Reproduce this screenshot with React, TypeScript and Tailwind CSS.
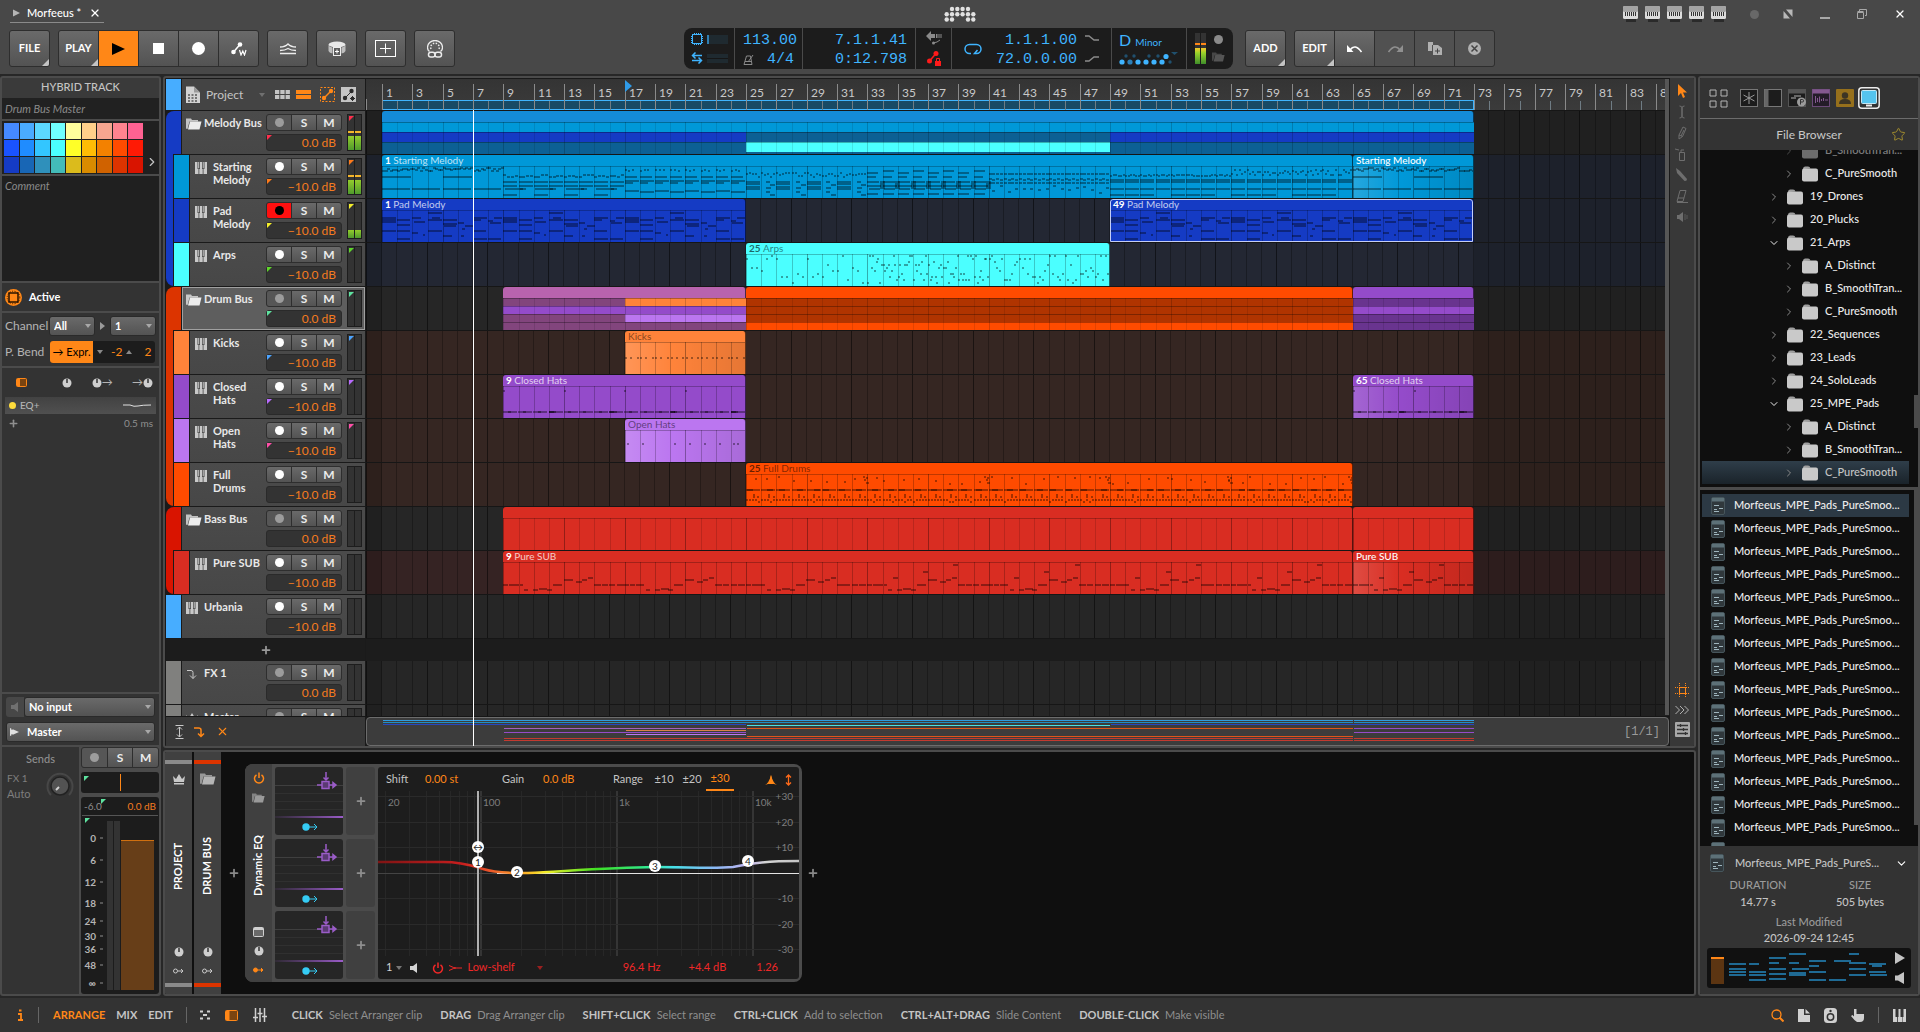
import { Fragment, type ReactNode } from "react";
import { clsx } from "clsx";
import { ChevronDown, ChevronRight, Plus, Star, X } from "lucide-react";

/* ---------- timeline helpers ---------- */

const TIMELINE_START = 16;
const BAR_WIDTH = 91 / 6;
const barX = (bar: number) => TIMELINE_START + Math.round((bar - 1) * BAR_WIDTH);
const span = (from: number, to: number) => ({
  left: barX(from),
  width: barX(to) - barX(from),
});
const noise = (n: number) => {
  const v = Math.sin(n * 127.1 + 11.7) * 43758.5453;
  return v - Math.floor(v);
};

// [bar, y, length in bars, height]
type Note = [number, number, number, number?];

function startingNotes(from: number, to: number): Note[] {
  const notes: Note[] = [];
  for (let b = from; b < to; b++) {
    const intro = b < 9 || b >= 65;
    if (intro) {
      for (let i = 0; i < 6; i++) notes.push([b + i / 6, 1 + Math.floor(noise(b * 7 + i) * 4), 0.17, 2]);
      if (b % 2 === 1) {
        notes.push([b, 22, 1.85]);
        if (b % 4 === 1) notes.push([b, 10, 1.9]);
      }
    } else if (b < 17) {
      for (let i = 0; i < 4; i++) notes.push([b + i / 4, 8 + Math.floor(noise(b + i * 3) * 3), 0.22]);
      notes.push([b, 15, 0.95], [b, 19, 0.9], [b + 0.1, 22, b % 2 ? 1.2 : 0.4]);
      if (b % 2) notes.push([b, 28, 0.9]);
    } else if (b < 25) {
      for (let i = 0; i < 3; i++) notes.push([b + i / 4, 3 + Math.floor(noise(b + i) * 2), 0.15]);
      notes.push([b, 10, 0.8], [b, 14, 0.95], [b, 16, 0.5], [b, b % 2 ? 24 : 25, 0.9]);
    } else if (b < 33) {
      for (let i = 0; i < 5; i++) notes.push([b + i / 5, 6 + Math.floor(noise(b * 5 + i) * 5), 0.1]);
      if (b % 2) notes.push([b, 15, 0.95], [b, 17, 0.95], [b, 20, 0.95], [b, 22, 0.9]);
      else notes.push([b + 0.3, 15, 0.25], [b + 0.6, 18, 0.3], [b + 0.3, 21, 0.3], [b + 0.3, 25, 0.25], [b + 0.6, 28, 0.35]);
    } else if (b < 41) {
      notes.push([b, b % 2 ? 6 : 4, 0.7], [b, 10, 0.6], [b, 15, 0.8, 2], [b, 19, 0.95], [b + 0.1, 22, 0.7], [b, 27, 0.7]);
      notes.push([b + 0.85, 15, 0.3, 8]);
    } else if (b < 49) {
      for (let i = 0; i < 4; i++) {
        notes.push([b + i / 4, 7, 0.19], [b + i / 4, 12 + (i % 2), 0.19], [b + i / 4, 16, 0.19]);
        if (i % 2) notes.push([b + i / 4, 19 + Math.floor(noise(b + i * 9) * 8), 0.19]);
      }
    } else {
      for (let i = 0; i < 6; i++)
        notes.push([b + i / 6, (b < 57 ? 8 : 3) + Math.floor(noise(b * 3 + i) * (b < 57 ? 2 : 6)), 0.11]);
      notes.push([b, 13, 0.95], [b, 15, 0.9], [b, 22, 0.95]);
      if (b % 4 !== 0) notes.push([b, 28, 0.95]);
    }
  }
  return notes;
}

function padNotes(from: number, to: number): Note[] {
  const notes: Note[] = [];
  for (let b = from; b < to; b++) {
    const k = (b - from) % 8;
    if (k === 0) notes.push([b, 7, 0.9, 6], [b, 20, 0.9]);
    else if (k === 1) notes.push([b, 9, 0.85], [b, 14, 0.85], [b, 20, 0.85], [b, 28, 0.85]);
    else if (k === 2) notes.push([b, 7, 0.6], [b + 0.1, 11, 0.7, 2], [b, 22, 0.4], [b + 0.7, 24, 0.12]);
    else if (k === 3) notes.push([b, 2, 0.9], [b, 9, 0.9], [b, 20, 0.9], [b + 0.3, 7, 0.5]);
    else if (k === 4) notes.push([b, 9, 0.9], [b, 13, 0.9], [b + 0.1, 15, 0.8], [b, 25, 0.6]);
    else if (k === 5) notes.push([b, 12, 0.4], [b + 0.3, 18, 0.2], [b + 0.5, 15, 0.5], [b + 0.2, 25, 0.2]);
    else if (k === 6) notes.push([b, 7, 0.9], [b, 9, 0.5], [b, 20, 0.85], [b, 28, 0.9]);
    else notes.push([b, 10, 0.3], [b + 0.4, 7, 0.5], [b + 0.1, 12, 0.7], [b, 28, 0.85]);
  }
  return notes;
}

function arpNotes(): Note[] {
  const notes: Note[] = [];
  for (let b = 25; b < 49; b++) {
    const count = b < 33 ? 3 : b < 41 ? 9 : 6;
    for (let i = 0; i < count; i++)
      notes.push([b + i / count, 1 + Math.floor(noise(b * 13 + i) * 10) * 3, 0.12]);
  }
  return notes;
}

function kickNotes(): Note[] {
  return Array.from({ length: 24 }, (_, i) => [17 + i / 3 + (i % 3 === 2 ? 0.1 : 0), 15, 0.12] as Note);
}

function closedHatNotes(from: number, to: number): Note[] {
  const notes: Note[] = [];
  for (let b = from; b < to; b++) {
    if ((b - from) % 4 === 0) notes.push([b, 4, 0.12]);
    notes.push([b, 25, 0.9], [b + 0.3, 25, 0.2]);
    if (b % 4 === 0) notes.push([b, 25, 0.3], [b + 0.05, 25, 0.25]);
  }
  return notes;
}

function openHatNotes(): Note[] {
  return [17.1, 18.1, 20.2, 21.2, 22.2, 23.2, 24.1, 24.4].map((b) => [b, 13, 0.12] as Note);
}

function fullDrumNotes(): Note[] {
  const notes: Note[] = [];
  for (let b = 25; b < 65; b++) {
    notes.push([b, 15, 0.95], [b + noise(b) * 0.5, 15, 0.4]);
    notes.push([b + noise(b * 2) * 0.8, 2 + Math.floor(noise(b * 3) * 8), 0.12]);
    if (b % 8 === 0) notes.push([b + 0.7, 2, 0.12], [b + 0.8, 5, 0.15], [b + 0.9, 8, 0.2], [b + 0.9, 3, 0.12]);
    for (let i = 0; i < 5; i++) notes.push([b + i / 5, 25 + (noise(b * 5 + i) > 0.85 ? 2 : 0), 0.13]);
    notes.push([b + 0.45, 20, 0.12, 4], [b + 0.75, 22, 0.12]);
  }
  return notes;
}

function subNotes(from: number, to: number): Note[] {
  const notes: Note[] = [];
  const phrase: Note[] = [
    [0, 22, 0.35], [0.4, 22, 0.3], [0.75, 22, 0.3], [1.1, 22, 0.2],
    [1.4, 27, 0.25], [2, 27, 0.3], [2.4, 26, 0.5], [2.9, 27, 0.3], [3.3, 22, 0.6],
    [4, 17, 0.6], [4.8, 19, 0.4], [5.2, 17, 0.3], [5.6, 15, 0.3],
    [6, 22, 0.45], [6.5, 22, 0.4], [7, 22, 0.4], [7.5, 22, 0.45],
  ];
  for (let b = from; b < to; b += 8) {
    for (const [x, y, len] of phrase) notes.push([b + x, y, len]);
    if (b >= 33) notes.push([b + 1.7, 15, 0.3], [b + 3.7, 9, 0.3], [b + 5.7, 2, 0.3]);
  }
  return notes.filter(([b]) => b < to);
}

/* ---------- data ---------- */

type Band = { from: number; to: number; colors: string[] };

type Clip = {
  from: number;
  to: number;
  color: string;
  label?: string;
  bar?: string;
  dark?: boolean;
  notes?: Note[];
  selected?: boolean;
  fade?: boolean;
};

type Track = {
  name: string;
  kind: "group" | "keys" | "fx" | "master";
  color: string;
  volume: string;
  lane: string;
  corner?: string;
  meter?: number;
  armed?: boolean;
  selected?: boolean;
  clips?: Clip[];
  bands?: Band[];
  children?: Track[];
};

const MELODY_DIM = "bg-[#0c6094]";
const DRUM_DIM = "bg-[#82457d]";
const ORANGE_DIM = "bg-[#b03400]";
const PURPLE_DIM = "bg-[#69348f]";
const PURPLE = "bg-[#944bca]";

const tracks: Track[] = [
  {
    name: "Melody Bus", kind: "group", color: "bg-[#153bc4]", volume: "0.0 dB", lane: "bg-[#262626]",
    corner: "fill-[#ff2e4c]", meter: 17,
    clips: [{ from: 1, to: 73, color: "bg-[#148bd8]" }],
    bands: [
      { from: 1, to: 25, colors: ["bg-[#0098d8]", "bg-[#153bc4]", MELODY_DIM] },
      { from: 25, to: 49, colors: ["bg-[#0098d8]", MELODY_DIM, "bg-[#4bffff]"] },
      { from: 49, to: 73, colors: ["bg-[#0098d8]", "bg-[#153bc4]", MELODY_DIM] },
    ],
    children: [
      {
        name: "Starting Melody", kind: "keys", color: "bg-[#0098d8]", volume: "−10.0 dB", lane: "bg-[#232733]",
        corner: "fill-[#ff7a1a]", meter: 17,
        clips: [
          { from: 1, to: 65, color: "bg-[#0098d8]", bar: "1", label: "Starting Melody", notes: startingNotes(1, 65) },
          { from: 65, to: 73, color: "bg-[#0098d8]", bar: "Starting Melody", notes: startingNotes(65, 73), fade: true },
        ],
      },
      {
        name: "Pad Melody", kind: "keys", color: "bg-[#153bc4]", volume: "−10.0 dB", lane: "bg-[#232733]",
        corner: "fill-[#f4ee2a]", meter: 11, armed: true,
        clips: [
          { from: 1, to: 25, color: "bg-[#153bc4]", bar: "1", label: "Pad Melody", notes: padNotes(1, 25) },
          { from: 49, to: 73, color: "bg-[#153bc4]", bar: "49", label: "Pad Melody", notes: padNotes(49, 73), selected: true },
        ],
      },
      {
        name: "Arps", kind: "keys", color: "bg-[#4bffff]", volume: "−10.0 dB", lane: "bg-[#232733]",
        corner: "fill-[#5ed62a]",
        clips: [{ from: 25, to: 49, color: "bg-[#4bffff]", bar: "25", label: "Arps", dark: true, notes: arpNotes() }],
      },
    ],
  },
  {
    name: "Drum Bus", kind: "group", color: "bg-[#dc3400]", volume: "0.0 dB", lane: "bg-[#262626]",
    corner: "fill-[#5ee3a0]", selected: true,
    clips: [
      { from: 9, to: 25, color: "bg-[#b863ae]" },
      { from: 25, to: 65, color: "bg-[#ff4b00]" },
      { from: 65, to: 73, color: PURPLE },
    ],
    bands: [
      { from: 9, to: 17, colors: [DRUM_DIM, PURPLE, DRUM_DIM, DRUM_DIM] },
      { from: 17, to: 25, colors: ["bg-[#ff833a]", PURPLE, "bg-[#bb76f0]", DRUM_DIM] },
      { from: 25, to: 65, colors: [ORANGE_DIM, ORANGE_DIM, ORANGE_DIM, "bg-[#ff4b00]"] },
      { from: 65, to: 73, colors: [PURPLE_DIM, PURPLE, PURPLE_DIM, PURPLE_DIM] },
    ],
    children: [
      {
        name: "Kicks", kind: "keys", color: "bg-[#ff833a]", volume: "−10.0 dB", lane: "bg-[#352622]", corner: "fill-[#4ba3ff]",
        clips: [{ from: 17, to: 25, color: "bg-[#ff833a]", label: "Kicks", dark: true, notes: kickNotes(), fade: true }],
      },
      {
        name: "Closed Hats", kind: "keys", color: PURPLE, volume: "−10.0 dB", lane: "bg-[#352622]", corner: "fill-[#b96bff]",
        clips: [
          { from: 9, to: 25, color: PURPLE, bar: "9", label: "Closed Hats", notes: closedHatNotes(9, 25) },
          { from: 65, to: 73, color: PURPLE, bar: "65", label: "Closed Hats", notes: closedHatNotes(65, 73), fade: true },
        ],
      },
      {
        name: "Open Hats", kind: "keys", color: "bg-[#bb76f0]", volume: "−10.0 dB", lane: "bg-[#352622]", corner: "fill-[#ff4fa8]",
        clips: [{ from: 17, to: 25, color: "bg-[#bb76f0]", label: "Open Hats", dark: true, notes: openHatNotes(), fade: true }],
      },
      {
        name: "Full Drums", kind: "keys", color: "bg-[#ff4b00]", volume: "−10.0 dB", lane: "bg-[#352622]",
        clips: [{ from: 25, to: 65, color: "bg-[#ff4b00]", bar: "25", label: "Full Drums", dark: true, notes: fullDrumNotes() }],
      },
    ],
  },
  {
    name: "Bass Bus", kind: "group", color: "bg-[#d91400]", volume: "0.0 dB", lane: "bg-[#262626]",
    clips: [
      { from: 9, to: 65, color: "bg-[#d92d22]" },
      { from: 65, to: 73, color: "bg-[#d92d22]" },
    ],
    children: [
      {
        name: "Pure SUB", kind: "keys", color: "bg-[#d92d22]", volume: "−10.0 dB", lane: "bg-[#352323]",
        clips: [
          { from: 9, to: 65, color: "bg-[#d92d22]", bar: "9", label: "Pure SUB", notes: subNotes(9, 65) },
          { from: 65, to: 73, color: "bg-[#d92d22]", bar: "Pure SUB", notes: subNotes(65, 73), fade: true },
        ],
      },
    ],
  },
  { name: "Urbania", kind: "keys", color: "bg-[#47adff]", volume: "−10.0 dB", lane: "bg-[#262626]" },
];

const returnTracks: Track[] = [
  { name: "FX 1", kind: "fx", color: "bg-[#80807e]", volume: "0.0 dB", lane: "bg-[#262626]" },
  { name: "Master", kind: "master", color: "bg-[#80807e]", volume: "0.0 dB", lane: "bg-[#262626]" },
];

const palette = [
  "bg-[#4589ff]", "bg-[#4aabff]", "bg-[#5cd8ff]", "bg-[#70ffff]", "bg-[#fffe9c]", "bg-[#ffd08a]", "bg-[#f6a690]", "bg-[#ff838f]", "bg-[#ff6292]",
  "bg-[#1a53ff]", "bg-[#1f8cff]", "bg-[#33c6ff]", "bg-[#4bffff]", "bg-[#ffff28]", "bg-[#ffbd05]", "bg-[#f38100]", "bg-[#ff4b00]", "bg-[#ff1a05]",
  "bg-[#153bc4]", "bg-[#1866b5]", "bg-[#2f90bb]", "bg-[#43bbb8]", "bg-[#dbbb1c]", "bg-[#d98b00]", "bg-[#d06200]", "bg-[#dc3400]", "bg-[#d91400]",
];

const tree = [
  { name: "B_SmoothTran...", level: 2 },
  { name: "C_PureSmooth", level: 2 },
  { name: "19_Drones", level: 1 },
  { name: "20_Plucks", level: 1 },
  { name: "21_Arps", level: 1, open: true },
  { name: "A_Distinct", level: 2 },
  { name: "B_SmoothTran...", level: 2 },
  { name: "C_PureSmooth", level: 2 },
  { name: "22_Sequences", level: 1 },
  { name: "23_Leads", level: 1 },
  { name: "24_SoloLeads", level: 1 },
  { name: "25_MPE_Pads", level: 1, open: true },
  { name: "A_Distinct", level: 2 },
  { name: "B_SmoothTran...", level: 2 },
  { name: "C_PureSmooth", level: 2, selected: true },
];

const hints = [
  ["CLICK", "Select Arranger clip"],
  ["DRAG", "Drag Arranger clip"],
  ["SHIFT+CLICK", "Select range"],
  ["CTRL+CLICK", "Add to selection"],
  ["CTRL+ALT+DRAG", "Slide Content"],
  ["DOUBLE-CLICK", "Make visible"],
];

/* ---------- icons ---------- */

function Icon(props: { w?: number; h?: number; className?: string; children: ReactNode }) {
  const { w = 16, h = 16 } = props;
  return (
    <svg width={w} height={h} viewBox={`0 0 ${w} ${h}`} className={clsx("shrink-0", props.className)} fill="none" aria-hidden="true">
      {props.children}
    </svg>
  );
}

function KeysIcon(props: { className?: string }) {
  return (
    <Icon w={12} h={12} className={clsx("fill-[#c9c9c9]", props.className)}>
      <path d="M0 0h3.500v12H0zM4.300 0h3.400v12H4.300zM8.500 0H12v12H8.500z" />
      <path d="M2.500 0h2.500v7H2.500zM7 0h2.500v7H7z" fill="#484848" />
      <path d="M3.200 0h1v6.300h-1zM7.700 0h1v6.300h-1z" />
    </Icon>
  );
}

function FolderOpenIcon(props: { className?: string }) {
  return (
    <Icon w={16} h={12} className={props.className ?? "fill-[#ececec]"}>
      <path d="M0 0.500h5l1 1.500h6v1.500H3.500L1.500 11H1Q0 11 0 10z" opacity="0.75" />
      <path d="M4 3.500h11.500l-2 8H2z" />
    </Icon>
  );
}

function FolderIcon() {
  return (
    <Icon w={16} h={16}>
      <path d="M1 3Q1 0.500 3 0.500h3q2 0 2.500 2z" fill="#9d9d9d" />
      <rect x="0" y="2.500" width="16" height="13" rx="2" fill="#c9c9c9" />
    </Icon>
  );
}

function FileIcon() {
  return (
    <Icon w={14} h={18}>
      <rect x="0.500" y="0.500" width="13" height="17" rx="1.500" fill="#30383c" stroke="#46555b" />
      <path d="M1 1h12v3.500H1z" fill="#5d7178" />
      <path d="M3 8.500h5M8 11.500h4M3 12.500h3M3 14.500h5" stroke="#9fb6be" />
    </Icon>
  );
}

function PowerIcon(props: { className?: string }) {
  return (
    <Icon w={12} h={12} className={props.className}>
      <path d="M3.500 2.800a4.500 4.500 0 1 0 5 0M6 0.500v5.500" stroke="currentColor" strokeWidth="1.500" />
    </Icon>
  );
}

function KnobIcon() {
  return (
    <Icon w={10} h={10}>
      <circle cx="5" cy="5" r="4.500" fill="#cfcfcf" />
      <path d="M5 1v4" stroke="#333" strokeWidth="1.500" />
    </Icon>
  );
}

function SpeakerIcon(props: { className?: string }) {
  return (
    <Icon w={8} h={10} className={props.className ?? "fill-[#c9c9c9]"}>
      <path d="M0 3h3l4-3v10L3 7H0z" />
    </Icon>
  );
}

function Caret(props: { className?: string; up?: boolean }) {
  return (
    <Icon w={6} h={4} className={props.className ?? "fill-[#9a9a9a]"}>
      <path d={props.up ? "M0 4h6L3 0z" : "M0 0h6L3 4z"} />
    </Icon>
  );
}

function Corner(props: { className?: string; fill: string }) {
  return (
    <svg width="5" height="5" viewBox="0 0 5 5" className={clsx("absolute", props.fill, props.className)} aria-hidden="true">
      <path d="M0 0h5L0 5z" />
    </svg>
  );
}

function RoutingIcon(props: { className?: string }) {
  return (
    <Icon w={11} h={6} className={props.className ?? "text-[#c9c9c9]"}>
      <circle cx="2.500" cy="3" r="2" stroke="currentColor" />
      <path d="M5 3h5M8 1l2 2-2 2" stroke="currentColor" />
    </Icon>
  );
}

/* ---------- top bar ---------- */

const buttonFace = "bg-linear-to-b from-[#6a6a6a] to-[#535353]";

function ToolButton(props: { label: string; className?: string; disabled?: boolean; menu?: boolean; children: ReactNode }) {
  return (
    <button
      type="button"
      aria-label={props.label}
      disabled={props.disabled}
      className={clsx(
        "relative flex h-[35px] w-[39px] items-center justify-center text-[11px] font-bold text-white",
        props.className ?? (props.disabled ? "bg-[#515151]" : buttonFace),
      )}
    >
      {props.children}
      {props.menu && (
        <svg width="7" height="7" viewBox="0 0 7 7" className="absolute right-0 bottom-0 fill-[#c4c4c4]" aria-hidden="true">
          <path d="M7 0v7H0z" />
        </svg>
      )}
    </button>
  );
}

function ButtonGroup(props: { children: ReactNode }) {
  return <div className="flex gap-px overflow-hidden rounded-[3px] border border-[#2e2e2e] bg-[#2e2e2e]">{props.children}</div>;
}

function WindowControls() {
  return (
    <div className="flex items-center text-[#a8a8a8]">
      <div className="flex gap-[7px]">
        {[0, 1, 2, 3, 4].map((i) => (
          <Icon key={i} w={15} h={17}>
            <rect width="15" height="13" rx="1.500" fill="#dcdcdc" />
            <rect width="15" height="6" rx="1.500" fill="#a3a3a3" />
            <path d="M2.500 6v4M4.500 6v4M6.500 6v4M8.500 6v4M10.500 6v4M12.500 6v4" stroke="#333" />
            <rect x="3" y="13" width="10" height="3" fill="#2a2a2a" />
          </Icon>
        ))}
      </div>
      <span className="ml-6 h-[9px] w-[9px] rounded-full bg-[#686868]" />
      <button type="button" aria-label="Full screen" className="ml-6">
        <Icon w={10} h={10}>
          <path d="M3 0.500h6.500V8zM0.500 2v7.500H7z" fill="#b8b8b8" />
        </Icon>
      </button>
      <button type="button" aria-label="Minimize" className="ml-[27px]">
        <Icon w={10} h={10}>
          <path d="M0 9h10" stroke="currentColor" strokeWidth="2" />
        </Icon>
      </button>
      <button type="button" aria-label="Restore" className="ml-[27px]">
        <Icon w={10} h={10}>
          <path d="M2.500 2V0.500h7v6H8M0.500 3.500h6v6h-6zM0.500 2.500h6" stroke="currentColor" />
        </Icon>
      </button>
      <button type="button" aria-label="Close window" className="ml-[27px] text-white">
        <X size={12} strokeWidth={2.5} />
      </button>
    </div>
  );
}

function Transport() {
  const cell = "flex h-full items-center border-r border-[#4a4a4a]";
  return (
    <div className="flex h-[41px] items-center overflow-hidden rounded-[8px] bg-[#1c1c1c] text-[#3fb4ff]">
      <div className={clsx(cell, "w-[51px] flex-col justify-between py-[5px]")}>
        <div className="flex items-center gap-1">
          <Icon w={12} h={12}>
            <rect x="1.500" y="1.500" width="9" height="9" stroke="currentColor" />
            <path d="M3.500 0v1M5.500 0v1M7.500 0v1M9.500 0v1M3.500 11v1M5.500 11v1M7.500 11v1M9.500 11v1M0 3.500h1M0 5.500h1M0 7.500h1M0 9.500h1M11 3.500h1M11 5.500h1M11 7.500h1M11 9.500h1" stroke="currentColor" />
          </Icon>
          <span className="h-[9px] w-[21px] border-l-2 border-[#2f7fb2] bg-[#1f2a30]" />
        </div>
        <div className="flex items-center gap-1">
          <Icon w={12} h={12}>
            <path d="M11 3.500H2M4.500 0.500L1.500 3.500l3 3M1 8.500h9M7.500 5.500l3 3-3 3" stroke="currentColor" strokeWidth="1.500" />
          </Icon>
          <span className="h-[9px] w-[21px] border-y-4 border-[#1f2a30] bg-[#161616]" />
        </div>
      </div>
      <div className={clsx(cell, "w-[68px] flex-col items-stretch px-2 pt-[3px] font-mono-lcd")}>
        <span className="text-right text-[15px] leading-[19px]">113.00</span>
        <span className="flex items-center justify-between text-[15px] leading-[19px]">
          <Icon w={12} h={11} className="text-[#8a8a8a]">
            <path d="M1 10.500h8L7.500 2h-4zM5 8l5-7M2 7.500h6" stroke="currentColor" />
          </Icon>
          4/4
        </span>
      </div>
      <div className={clsx(cell, "w-[113px] flex-col items-stretch pt-[3px] pr-2 font-mono-lcd")}>
        <span className="text-right text-[15px] leading-[19px]">7.1.1.41</span>
        <span className="text-right text-[15px] leading-[19px]">0:12.798</span>
      </div>
      <div className={clsx(cell, "w-9 flex-col justify-around")}>
        <Icon w={16} h={14}>
          <path d="M0 5l5-5v3h4v4H5v3zM10 3h1.500v4H10zM12.500 3h1v4h-1zM14.500 3h1v4h-1z" fill="#8a8a8a" />
          <path d="M7 12l4-1 3-2" stroke="#8a8a8a" />
          <circle cx="7.500" cy="12" r="1.500" fill="#8a8a8a" />
        </Icon>
        <Icon w={14} h={15}>
          <path d="M2.500 10L9 2.500" stroke="#ff1a1a" strokeWidth="1.500" />
          <circle cx="2.500" cy="10" r="2.500" fill="#ff1a1a" />
          <circle cx="9" cy="2.500" r="2.500" fill="#ff1a1a" />
          <path d="M8 10h6v5H8z" fill="#ff1a1a" />
          <path d="M9.500 10V7.500h3V10" stroke="#ff1a1a" />
        </Icon>
      </div>
      <div className={clsx(cell, "w-40 gap-2 px-3")}>
        <button type="button" aria-label="Loop">
          <Icon w={18} h={12}>
            <path d="M7 10.500H5.500a4.500 4.500 0 0 1 0-9h7a4.500 4.500 0 0 1 0 9H11M13.500 7l-3 3.500h4" stroke="currentColor" strokeWidth="1.500" />
          </Icon>
        </button>
        <div className="flex flex-1 flex-col pt-[3px] font-mono-lcd">
          <span className="text-right text-[15px] leading-[19px]">1.1.1.00</span>
          <span className="text-right text-[15px] leading-[19px]">72.0.0.00</span>
        </div>
        <div className="flex flex-col gap-[15px] text-[#8a8a8a]">
          <Icon w={14} h={6}>
            <path d="M0 1h4l5 4h5" stroke="currentColor" strokeWidth="1.500" />
          </Icon>
          <Icon w={14} h={6}>
            <path d="M0 5h4l5-4h5" stroke="currentColor" strokeWidth="1.500" />
          </Icon>
        </div>
      </div>
      <div className={clsx(cell, "w-[75px] flex-col items-start pt-[2px] pl-[7px]")}>
        <span className="text-[16px] leading-5">
          D <span className="text-[10px]">Minor</span>
        </span>
        <Icon w={60} h={14}>
          {[3, 11, 19, 27, 35, 43].map((x) => (
            <circle key={x} cx={x} cy="10" r="2.600" fill={x === 11 ? "#2c7fb8" : "#3fb4ff"} />
          ))}
          <circle cx="47" cy="4.500" r="2.600" fill="#3fb4ff" />
          {[7, 15, 30, 39].map((x) => (
            <circle key={x} cx={x} cy="4" r="1.700" fill="#20506e" />
          ))}
          <circle cx="51" cy="10" r="1.700" fill="#20506e" />
          <path d="M52 0h7l-3.500 3z" fill="#20506e" />
        </Icon>
      </div>
      <div className="flex h-full w-[46px] items-center gap-[6px] pl-2">
        <div className="flex gap-px">
          {[0, 1].map((i) => (
            <div key={i} className="flex h-[31px] w-[5px] flex-col justify-end bg-[#333]">
              <span className="mb-[3px] h-[2px] bg-[#ff8717]" />
              <span className="h-[16px] bg-linear-to-b from-[#f3c62c] via-[#9ad32a] via-30% to-[#3f8f2a]" />
            </div>
          ))}
        </div>
        <div className="flex flex-col items-center gap-2">
          <span className="h-[9px] w-[9px] rounded-full bg-[#8a8a8a]" />
          <FolderOpenIcon className="h-[10px] w-[13px] fill-[#555]" />
        </div>
      </div>
    </div>
  );
}

function TopBar() {
  return (
    <header className="shrink-0 border-b-2 border-[#272727] bg-[#484848]">
      <div className="grid h-7 grid-cols-[1fr_auto_1fr] items-center px-[10px]">
        <div className="flex h-full items-end">
          <div className="mb-[5px] flex items-center border-b border-[#8a8a8a] px-[3px] pb-[1px]">
            <Icon w={7} h={8} className="fill-[#b5b5b5]">
              <path d="M0 0.500v7L7 4z" />
            </Icon>
            <span className="ml-[7px] text-[11px] leading-4 font-medium text-white">Morfeeus *</span>
            <button type="button" aria-label="Close project" className="ml-2 text-white">
              <X size={12} strokeWidth={2.5} />
            </button>
          </div>
        </div>
        <Icon w={32} h={16} className="fill-[#e2e2e2]">
          {[8, 13.3, 18.600, 24].map((x) => (
            <circle key={x} cx={x} cy="3" r="2.200" />
          ))}
          {[2.7, 8, 13.3, 18.600, 24, 29.3].map((x) => (
            <circle key={x} cx={x} cy="8.300" r="2.200" />
          ))}
          {[2.7, 8, 24, 29.3].map((x) => (
            <circle key={x} cx={x} cy="13.500" r="2.200" />
          ))}
        </Icon>
        <div className="flex justify-end pr-[4px]">
          <WindowControls />
        </div>
      </div>
      <div className="grid h-[46px] grid-cols-[1fr_auto_1fr] items-start pt-[2px] pr-3 pl-[9px]">
        <div className="flex gap-2">
          <ButtonGroup>
            <ToolButton label="File" menu>FILE</ToolButton>
          </ButtonGroup>
          <ButtonGroup>
            <ToolButton label="Play options" menu>PLAY</ToolButton>
            <ToolButton label="Play" className="bg-[#ff8717]">
              <Icon w={13} h={12} className="fill-black">
                <path d="M0 0l13 6L0 12z" />
              </Icon>
            </ToolButton>
            <ToolButton label="Stop">
              <span className="h-[11px] w-[11px] bg-white" />
            </ToolButton>
            <ToolButton label="Record">
              <span className="h-[13px] w-[13px] rounded-full bg-white" />
            </ToolButton>
            <ToolButton label="Automation write">
              <Icon w={16} h={14}>
                <path d="M2.500 10L9 2.500" stroke="white" strokeWidth="1.500" />
                <circle cx="2.500" cy="10" r="2.300" fill="white" />
                <circle cx="9" cy="2.500" r="2.300" fill="white" />
                <path d="M8.500 8l1.500 5 1.800-4 1.700 4L15 8" stroke="white" strokeWidth="1.200" />
              </Icon>
            </ToolButton>
          </ButtonGroup>
          <ButtonGroup>
            <ToolButton label="Groove">
              <Icon w={16} h={12}>
                <path d="M0 4q5 0 8-3 3 3 8 3M0 7.500q5 0 8-2 3 2 8 2M0 10.500h16" stroke="#ececec" strokeWidth="1.300" />
              </Icon>
            </ToolButton>
          </ButtonGroup>
          <ButtonGroup>
            <ToolButton label="Add drum">
              <Icon w={18} h={15}>
                <ellipse cx="9" cy="3.500" rx="8.500" ry="3" fill="#e8e8e8" />
                <path d="M0.500 4v6q1 2 4 2.500v-6Q1.500 6 0.500 4zM17.500 4v6q-1 2-4 2.500v-6q3-.5 4-2.500z" fill="#bdbdbd" />
                <rect x="5.500" y="6.500" width="7" height="8" fill="#5c5c5c" stroke="#ececec" />
                <path d="M7 10.500h4M9 8.500v4" stroke="#fff" />
              </Icon>
            </ToolButton>
          </ButtonGroup>
          <ButtonGroup>
            <ToolButton label="Add window">
              <Icon w={21} h={17}>
                <rect x="0.500" y="0.500" width="20" height="16" stroke="white" />
                <path d="M5 8.500h11M10.500 3.500v10" stroke="white" />
              </Icon>
            </ToolButton>
          </ButtonGroup>
          <ButtonGroup>
            <ToolButton label="Link">
              <Icon w={16} h={18}>
                <path d="M2.500 11.500Q0.500 10 0.500 7.500a7.500 7 0 0 1 15 0Q15.500 10 13.500 11.500" stroke="#ececec" strokeWidth="1.300" />
                <path d="M4 9a4.300 4.300 0 1 1 8 0" stroke="#ececec" strokeWidth="1.500" strokeDasharray="1.500 1.500" />
                <rect x="1.500" y="12.300" width="6.500" height="4.700" rx="2.300" stroke="#ececec" strokeWidth="1.500" />
                <rect x="8" y="12.300" width="6.500" height="4.700" rx="2.300" stroke="#ececec" strokeWidth="1.500" />
              </Icon>
            </ToolButton>
          </ButtonGroup>
        </div>
        <div className="-mt-[2px]">
          <Transport />
        </div>
        <div className="flex gap-2 pl-3">
          <ButtonGroup>
            <ToolButton label="Add" menu>ADD</ToolButton>
          </ButtonGroup>
          <ButtonGroup>
            <ToolButton label="Edit" menu>EDIT</ToolButton>
            <ToolButton label="Undo">
              <Icon w={16} h={9}>
                <path d="M3 6Q8-1 14.500 8" stroke="white" strokeWidth="1.600" />
                <path d="M0 1v7h6.500z" fill="white" />
              </Icon>
            </ToolButton>
            <ToolButton label="Redo" disabled>
              <Icon w={16} h={9}>
                <path d="M13 6Q8-1 1.500 8" stroke="#909090" strokeWidth="1.600" />
                <path d="M16 1v7H9.500z" fill="#909090" />
              </Icon>
            </ToolButton>
            <ToolButton label="Duplicate" disabled>
              <Icon w={14} h={13}>
                <path d="M0 0h5v3H4v6H0zM5 3h5l4 3v7H5z" fill="#b0b0b0" />
                <path d="M7 9h5M9.500 6.500v5" stroke="#444" />
              </Icon>
            </ToolButton>
            <ToolButton label="Delete" disabled>
              <Icon w={13} h={13}>
                <circle cx="6.500" cy="6.500" r="6.500" fill="#b0b0b0" />
                <path d="M3.500 3.500l6 6M9.500 3.500l-6 6" stroke="#444" strokeWidth="1.500" />
              </Icon>
            </ToolButton>
          </ButtonGroup>
        </div>
      </div>
    </header>
  );
}

/* ---------- inspector ---------- */

function RecSoloMute(props: { name: string; enabled?: boolean; armed?: boolean; className?: string }) {
  return (
    <div className={clsx("flex shrink-0 gap-px overflow-hidden rounded-[3px] border border-[#2e2e2e] bg-[#2e2e2e]", props.className)}>
      <button
        type="button"
        aria-label={`Record arm ${props.name}`}
        className={clsx("flex flex-1 items-center justify-center", props.armed ? "bg-[#ff1010]" : props.enabled ? buttonFace : "bg-[#565656]")}
      >
        <span className={clsx("h-[9px] w-[9px] rounded-full", props.armed ? "bg-black" : props.enabled ? "bg-white" : "bg-[#9c9c9c]")} />
      </button>
      <button type="button" aria-label={`Solo ${props.name}`} className={clsx("flex flex-1 items-center justify-center text-[12px] leading-none font-bold text-[#ececec]", buttonFace)}>
        S
      </button>
      <button type="button" aria-label={`Mute ${props.name}`} className={clsx("flex flex-1 items-center justify-center text-[12px] leading-none font-bold text-[#ececec]", buttonFace)}>
        M
      </button>
    </div>
  );
}

function SelectBox(props: { label: string; value: string; className?: string }) {
  return (
    <span className={clsx("relative flex items-center", props.className)}>
      <select
        aria-label={props.label}
        defaultValue={props.value}
        className={clsx("h-5 w-full appearance-none rounded-[3px] border border-[#2a2a2a] px-1 text-[11px] font-bold text-white", buttonFace)}
      >
        <option>{props.value}</option>
      </select>
      <Caret className="absolute right-[4px] fill-[#a8a8a8]" />
    </span>
  );
}

const meterScale = [
  { label: "0", h: "h-[22px]" },
  { label: "6", h: "h-[22px]" },
  { label: "12", h: "h-[22px]" },
  { label: "18", h: "h-5" },
  { label: "24", h: "h-4" },
  { label: "30", h: "h-[14px]" },
  { label: "36", h: "h-[12px]" },
  { label: "48", h: "h-5" },
  { label: "∞", h: "h-4" },
];

function Inspector() {
  return (
    <aside className="flex w-[161px] shrink-0 flex-col gap-[2px] overflow-hidden rounded-[3px] border-2 border-[#4b4b4b] bg-[#4b4b4b] text-[12px] text-[#b4b4b4]">
      <div className="bg-[#3a3a3a]">
        <h2 className="h-5 text-center text-[11px] leading-[18px] font-medium text-[#c4c4c4]">HYBRID TRACK</h2>
        <input
          aria-label="Track name"
          placeholder="Drum Bus Master"
          className="block h-[21px] w-full bg-[#212121] px-[3px] text-[11px] italic placeholder:text-[#8a8a8a]"
        />
      </div>
      <div className="flex h-[53px] shrink-0 items-end bg-[#202020] pb-px pl-[2px]">
        <div className="grid w-[139px] grid-cols-9 gap-px">
          {palette.map((color) => (
            <button key={color} type="button" aria-label="Track color" className={clsx("h-4", color)} />
          ))}
        </div>
        <ChevronRight size={14} className="mb-1 ml-[2px] text-[#c4c4c4]" />
      </div>
      <textarea
        aria-label="Comment"
        placeholder="Comment"
        className="h-[105px] shrink-0 resize-none bg-[#202020] px-[3px] py-[2px] text-[11px] italic placeholder:text-[#8a8a8a]"
      />
      <div className="flex h-7 shrink-0 items-center gap-[7px] bg-[#333] pl-[3px]">
        <Icon w={17} h={17}>
          <circle cx="8.500" cy="8.500" r="8.500" fill="#ff8717" />
          <rect x="4" y="4" width="9" height="9" stroke="#2a1500" strokeWidth="1.500" />
          <circle cx="8.500" cy="8.500" r="6.300" stroke="#2a1500" strokeDasharray="1 1.500" />
        </Icon>
        <span className="text-[11px] font-bold text-white">Active</span>
      </div>
      <div className="flex h-[53px] shrink-0 flex-col justify-around bg-[#333] px-[3px]">
        <div className="flex items-center">
          <span className="w-11">Channel</span>
          <SelectBox label="Channel" value="All" className="w-[46px]" />
          <Icon w={5} h={8} className="mx-[5px] fill-[#9a9a9a]">
            <path d="M0 0v8l5-4z" />
          </Icon>
          <SelectBox label="Target channel" value="1" className="w-[46px]" />
        </div>
        <div className="flex items-center">
          <span className="w-[45px]">P. Bend</span>
          <div className="flex h-[22px] w-[105px] items-center overflow-hidden rounded-[3px] bg-[#1c1c1c] text-[#ff8717]">
            <button type="button" className="h-full w-[43px] bg-[#ff8717] text-[11px] text-black">→ Expr.</button>
            <Caret className="ml-1 fill-[#8a8a8a]" />
            <span className="ml-2">-2</span>
            <Caret className="ml-1 fill-[#8a8a8a]" up />
            <span className="ml-3">2</span>
          </div>
        </div>
      </div>
      <div className="flex-1 bg-[#333]">
        <div className="flex h-[29px] items-center justify-between px-[14px]">
          <Icon w={11} h={9}>
            <rect x="0.500" y="0.500" width="10" height="8" rx="1" fill="#7a4410" stroke="#ff8717" />
            <path d="M1 1h3v7H1z" fill="#ff8717" />
          </Icon>
          <span className="ml-4"><KnobIcon /></span>
          <span className="flex items-center text-[11px]"><KnobIcon />→</span>
          <span className="-mr-2 flex items-center text-[11px]">→<KnobIcon /></span>
        </div>
        <div className="mx-[3px] flex h-[17px] items-center bg-linear-to-b from-[#424242] to-[#505050] px-1 text-[10px]">
          <span className="h-[7px] w-[7px] rounded-full bg-[#ffdc3c]" />
          <span className="ml-1 flex-1 font-medium">EQ+</span>
          <Icon w={29} h={6}>
            <path d="M0 2h7q4 2 8 1t13-1" stroke="#e0e0e0" />
          </Icon>
        </div>
        <div className="flex h-[19px] items-center justify-between px-[6px] text-[10px] text-[#8f8f8f]">
          <Plus size={11} strokeWidth={3.5} />
          0.5 ms
        </div>
      </div>
      <div className="flex h-[51px] shrink-0 flex-col justify-around bg-[#333] px-1">
        <div className="flex">
          <button type="button" aria-label="Monitor" className="flex w-[18px] items-center justify-center rounded-l-[3px] bg-[#474747]">
            <SpeakerIcon className="fill-[#707070]" />
          </button>
          <SelectBox label="Input" value="No input" className="flex-1" />
        </div>
        <div className="relative flex items-center">
          <select aria-label="Output" defaultValue="Master" className={clsx("h-5 w-full appearance-none rounded-[3px] border border-[#2a2a2a] pl-5 text-[11px] font-bold text-white", buttonFace)}>
            <option>Master</option>
          </select>
          <Icon w={9} h={8} className="absolute left-1">
            <path d="M0 0l9 4-9 4z" fill="#e0e0e0" />
            <path d="M2 0v2M2 6v2" stroke="#5c5c5c" />
          </Icon>
          <Caret className="absolute right-[4px] fill-[#a8a8a8]" />
        </div>
      </div>
      <div className="flex h-[247px] shrink-0 gap-[2px]">
        <div className="w-[77px] bg-[#333] px-[5px] text-[#7e7e7e]">
          <h3 className="pt-1 text-center text-[11px] leading-4 font-medium text-[#8f8f8f]">Sends</h3>
          <div className="flex items-center justify-between pt-1">
            <div className="leading-[15px]">
              <p className="text-[10px]">FX 1</p>
              <p className="text-[11px]">Auto</p>
            </div>
            <Icon w={28} h={28}>
              <path d="M5 23a12.500 12.500 0 1 1 18 0" stroke="#474747" strokeWidth="2" />
              <circle cx="14" cy="14" r="9" fill="#525252" stroke="#222" strokeWidth="1.500" />
              <path d="M10 18l3-3" stroke="#d0d0d0" strokeWidth="2" />
            </Icon>
          </div>
        </div>
        <div className="flex flex-1 flex-col gap-1">
          <RecSoloMute name="Drum Bus Master" className="h-[21px]" />
          <div className="relative flex h-[21px] shrink-0 justify-center rounded-[3px] bg-[#1c1c1c]">
            <Corner fill="fill-[#5ee3a0]" className="top-1 left-[3px]" />
            <span className="my-[2px] w-px bg-[#ff8717]" />
          </div>
          <div className="relative flex min-h-0 flex-1 flex-col rounded-[3px] bg-[#1c1c1c]">
            <div className="mx-px flex h-[19px] shrink-0 items-center justify-between border-b border-[#555] px-[2px] text-[10px]">
              <span className="text-[#8f8f8f]">-6.0</span>
              <span className="text-[#f47b20]">0.0 dB</span>
            </div>
            <Corner fill="fill-[#5ee3a0]" className="top-[2px] left-5" />
            <Corner fill="fill-[#5ee3a0]" className="top-[21px] left-1" />
            <div className="flex min-h-0 flex-1 pr-[5px] pb-1">
              <div className="w-[26px] pt-[11px] pr-1 text-right text-[10px] font-bold">
                {meterScale.map(({ label, h }) => (
                  <div key={label} className={clsx("flex items-center justify-end gap-1", h)}>
                    {label}
                    <span className="h-[2px] w-[3px] bg-[#555]" />
                  </div>
                ))}
              </div>
              <div className="mt-[5px] flex gap-px">
                <span className="w-[6px] bg-[#333]" />
                <span className="w-[6px] bg-[#333]" />
              </div>
              <div className="mt-[24px] ml-px flex-1 border-t border-[#d07010] bg-[#673e18]" />
            </div>
          </div>
        </div>
      </div>
    </aside>
  );
}

/* ---------- arranger ---------- */

function TrackIcon(props: { kind: Track["kind"] }) {
  if (props.kind === "group") return <FolderOpenIcon />;
  if (props.kind === "keys") return <KeysIcon />;
  if (props.kind === "fx")
    return (
      <Icon w={12} h={12} className="text-[#c9c9c9]">
        <path d="M1 2.500h4q2 0 2 2v6M4 7.500l3 3 3-3" stroke="currentColor" />
      </Icon>
    );
  return (
    <Icon w={12} h={12}>
      <path d="M0 3l3 3 3-5 3 5 3-3-1.500 8h-9z" fill="#c9c9c9" />
    </Icon>
  );
}

function TrackHeader(props: { track: Track; nested?: boolean }) {
  const { track, nested } = props;
  const isGroup = track.kind === "group";
  return (
    <div
      className={clsx(
        "flex h-[43px] flex-1 pt-[3px]",
        track.selected ? "bg-[#5e5e5e] outline -outline-offset-1 outline-[#a0a0a0]" : "bg-linear-to-b from-[#4b4b4b] to-[#474747]",
        nested ? "pl-[5px]" : "pl-1",
      )}
    >
      <div className={clsx("shrink-0 pt-1", isGroup ? "w-[18px]" : "w-[18px]")}>
        <TrackIcon kind={track.kind} />
      </div>
      <span
        className={clsx(
          "pt-[2px] text-[11px] leading-[13px] font-bold text-[#e8e8e8]",
          nested ? "w-[50px]" : "whitespace-nowrap",
        )}
      >
        {track.name}
      </span>
      <div className="ml-auto w-[76px] shrink-0">
        <RecSoloMute name={track.name} enabled={track.kind === "keys"} armed={track.armed} className="h-[17px]" />
        <div className="relative mt-[3px] h-[17px] rounded-[3px] border border-[#2a2a2a] bg-[#333] pr-[5px] text-right text-[12px] leading-[15px] text-[#f47b20]">
          {track.corner && <Corner fill={track.corner} className="top-0 left-0" />}
          {track.volume}
        </div>
      </div>
      <div className="relative mr-[3px] ml-[5px] flex h-[37px] w-[15px] shrink-0 items-end gap-px border border-[#1d1d1d] bg-[#1d1d1d]">
        {[0, 1].map((i) => (
          <div key={i} className="flex h-full w-[6px] flex-col justify-end bg-[#333]">
            {track.meter && (
              <>
                <span className={clsx("mb-[3px] h-[2px]", track.meter > 12 ? "bg-[#f5b52a]" : "hidden")} />
                <span style={{ height: track.meter - 3 }} className="bg-linear-to-b from-[#93cc2c] to-[#4f9a2c]" />
              </>
            )}
          </div>
        ))}
        {track.corner && <Corner fill={track.corner} className="top-px left-px" />}
      </div>
    </div>
  );
}

function TrackHeaders(props: { items: Track[] }) {
  return (
    <>
      {props.items.map((track) => (
        <div key={track.name} className={clsx("mb-px shrink-0 overflow-hidden", track.color, track.children && "rounded-l-[8px]")}>
          <div className="flex pl-[15px]">
            <div className="flex flex-1 border-l border-[#1a1a1a]">
              <TrackHeader track={track} />
            </div>
          </div>
          {track.children?.map((child) => (
            <div key={child.name} className="flex pl-[7px]">
              <div className="flex flex-1 border-t border-l border-[#1a1a1a] bg-[#1a1a1a]">
                <div className={clsx("mr-px w-[15px]", child.color)} />
                <TrackHeader track={child} nested />
              </div>
            </div>
          ))}
        </div>
      ))}
    </>
  );
}

function BarLines(props: { from: number; to: number; strong: string; weak: string; top?: number; height: number }) {
  const origin = barX(props.from);
  const bars = Array.from({ length: props.to - props.from }, (_, i) => props.from + i);
  return (
    <>
      {bars.map((bar) => (
        <rect key={bar} x={barX(bar) - origin} y={props.top ?? 0} width="1" height={props.height} fill={(bar - 1) % 4 === 0 ? props.strong : props.weak} />
      ))}
    </>
  );
}

function ClipView(props: { clip: Clip }) {
  const { clip } = props;
  const { width } = span(clip.from, clip.to);
  return (
    <div style={span(clip.from, clip.to)} className={clsx("absolute top-0 h-[43px] overflow-hidden rounded-t-[3px] border-r border-black/60", clip.color)}>
      <p className="h-[11px] pl-[3px] text-[10px] leading-[11px] whitespace-nowrap">
        {clip.bar && <span className={clsx(clip.label ? "font-bold" : "font-medium", clip.dark ? "text-black/60" : "text-white")}>{clip.bar} </span>}
        <span className={clip.dark ? "text-black/50" : "text-white/75"}>{clip.label}</span>
      </p>
      {clip.fade && <div className="absolute inset-x-0 top-[11px] bottom-0 bg-linear-to-r from-white/15 via-transparent via-40% to-black/10" />}
      <svg width={width} height="32" className="absolute top-[11px] left-0" aria-hidden="true">
        <rect width={width} height="1" fill="#000" opacity="0.25" />
        <BarLines from={clip.from} to={clip.to} strong="rgba(0,0,0,0.32)" weak={clip.notes ? "rgba(0,0,0,0.22)" : "rgba(0,0,0,0.14)"} height={32} />
        {clip.notes?.map(([bar, y, len, h = 2], i) => (
          <rect key={i} x={Math.round((bar - clip.from) * BAR_WIDTH)} y={y} width={Math.max(2, Math.round(len * BAR_WIDTH))} height={h} fill="#000" opacity="0.36" />
        ))}
      </svg>
      {clip.selected && <div className="absolute inset-0 rounded-t-[3px] border border-[#c4cdf5]" />}
    </div>
  );
}

function BandView(props: { band: Band }) {
  const { band } = props;
  const tall = band.colors.length === 3;
  return (
    <div style={span(band.from, band.to)} className={clsx("absolute top-[11px] h-8", tall && MELODY_DIM)}>
      {band.colors.map((color, i) => (
        <div key={i} className={clsx("border-t border-black/30", color, tall ? "h-[10px]" : "h-2")} />
      ))}
      <svg width="100%" height="32" className="absolute inset-0" aria-hidden="true">
        <BarLines from={band.from} to={band.to} strong="rgba(0,0,0,0.18)" weak="rgba(0,0,0,0.1)" height={32} />
      </svg>
    </div>
  );
}

function Lane(props: { track: Track }) {
  const { track } = props;
  return (
    <div className={clsx("relative h-11 overflow-hidden border-b border-[#161616]", track.lane)}>
      <svg width="100%" height="44" className="absolute inset-0" aria-hidden="true">
        <rect width={TIMELINE_START} height="44" fill="#000" opacity="0.15" />
        <rect x={barX(73)} width="100%" height="44" fill="#000" opacity="0.15" />
        <BarLines from={1} to={87} strong="rgba(0,0,0,0.5)" weak="rgba(0,0,0,0.28)" height={44} />
      </svg>
      {track.clips?.map((clip) => <ClipView key={clip.from} clip={clip} />)}
      {track.bands?.map((band) => <BandView key={band.from} band={band} />)}
    </div>
  );
}

function Ruler() {
  const labels = Array.from({ length: 43 }, (_, i) => i * 2 + 1);
  return (
    <div className="relative h-8 min-w-0 flex-1 overflow-hidden bg-linear-to-b from-[#343434] to-[#3b3b3b]">
      <svg width="100%" height="32" className="absolute inset-0" aria-hidden="true">
        <rect x={barX(1)} y="21" width={barX(73) - barX(1)} height="10" fill="#184a66" />
        <path d={`M${barX(1)} 21.500H${barX(73)}M${barX(1)} 30.500H${barX(73)}M${barX(73) - 0.5} 21V31`} stroke="#3fb4ff" />
        {labels.map((bar) => (
          <Fragment key={bar}>
            <rect x={barX(bar)} y="5" width="1" height="26" fill="#8a8a8a" />
            <rect x={barX(bar + 1)} y="22" width="1" height="9" fill="#6f7c84" />
          </Fragment>
        ))}
        <rect x="0" y="20" width="1" height="11" fill="#8a8a8a" />
        <path d={`M${barX(17)} 1v12l7-6z`} fill="#2f9be8" />
        <rect y="31" width="100%" height="1" fill="#161616" />
      </svg>
      {labels.map((bar) => (
        <span key={bar} style={{ left: barX(bar) + 4 }} className="absolute top-[6px] text-[12px] leading-4 text-[#c9c9c9]">
          {bar}
        </span>
      ))}
    </div>
  );
}

function OverviewStrip() {
  const lines: [number, number, number, string][] = [
    [1, 65, 3, "#2f9be0"], [65, 73, 3, "#2f9be0"], [1, 65, 5, "#1f8fc4"], [65, 73, 5, "#1f8fc4"],
    [1, 25, 7, "#2746c0"], [49, 73, 7, "#2746c0"], [25, 49, 8, "#4be0e0"],
    [9, 25, 11, "#a35fc0"], [25, 65, 11, "#e0551a"], [65, 73, 11, "#944bca"],
    [17, 25, 13, "#d98048"], [9, 25, 15, "#944bca"], [65, 73, 15, "#944bca"],
    [17, 25, 17, "#bb76f0"], [25, 65, 19, "#e0551a"],
    [9, 65, 21, "#c23a30"], [65, 73, 21, "#c23a30"], [9, 65, 23, "#c23a30"], [65, 73, 23, "#c23a30"],
  ];
  return (
    <div className="relative flex min-w-0 flex-1 items-center justify-end overflow-hidden rounded-[4px] border border-[#6c6c6c] bg-[#3c3c3c] pr-2">
      <svg width="100%" height="28" className="absolute inset-0" aria-hidden="true">
        {lines.map(([from, to, y, color], i) => (
          <rect key={i} x={barX(from)} y={y - 1} width={barX(to) - barX(from) - 1} height="1" fill={color} />
        ))}
      </svg>
      <span className="relative font-mono-lcd text-[12px] text-[#9a9a9a]">[1/1]</span>
    </div>
  );
}

function ToolColumn() {
  const tool = "text-[#6e6e6e]";
  return (
    <div className="flex w-6 shrink-0 flex-col items-center bg-[#383838] pt-[6px] pb-[9px]">
      <div className="flex flex-col items-center gap-[7px]">
        <button type="button" aria-label="Pointer"><Icon w={14} h={14}><path d="M3 0v12l3-3 2 5 2-1-2-4.500h4z" fill="#ff8717" /></Icon></button>
        <button type="button" aria-label="Time selection"><Icon w={14} h={14} className={tool}><path d="M4.500 1Q7 1 7 3v8q0 2-2.500 2M9.500 1Q7 1 7 3v8q0 2 2.500 2" stroke="currentColor" /></Icon></button>
        <button type="button" aria-label="Pen"><Icon w={14} h={14} className={tool}><path d="M4 13V9l4-8 3 1.500-3.500 8zM4 9l3.500 1.500M9 4l-3 6" stroke="currentColor" /></Icon></button>
        <button type="button" aria-label="Spray"><Icon w={14} h={14} className={tool}><path d="M4.500 5.500h5v8h-5zM6 5V3h3M0 2l4 1" stroke="currentColor" /></Icon></button>
        <button type="button" aria-label="Knife"><Icon w={14} h={14} className={tool}><path d="M1 0l4 3 7 8q0 2.500-2.500 2L2 5z" fill="currentColor" /></Icon></button>
        <button type="button" aria-label="Eraser"><Icon w={14} h={14} className={tool}><path d="M5 1.500h6L8 12.500H2zM3 9h6M2 13.500h11" stroke="currentColor" /></Icon></button>
        <button type="button" aria-label="Audition"><Icon w={14} h={14} className={tool}><path d="M2 5h2l4-3v10l-4-3H2z" fill="currentColor" /><path d="M10 4v6M12 5v4" stroke="currentColor" opacity="0.6" /></Icon></button>
      </div>
      <div className="mt-auto flex flex-col items-center gap-[7px]">
        <Icon w={15} h={15}>
          <rect x="4.500" y="4.500" width="6" height="6" stroke="#ff8717" />
          <path d="M4.500 0v4M10.500 0v4M4.500 11v4M10.500 11v4M0 4.500h4M0 10.500h4M11 4.500h4M11 10.500h4" stroke="#ff8717" strokeDasharray="1 1" />
        </Icon>
        <Icon w={14} h={10}>
          <path d="M0.500 1l4 4-4 4M5 1l4 4-4 4M9.500 1l4 4-4 4" stroke="#b0b0b0" />
        </Icon>
        <Icon w={15} h={15}>
          <rect width="15" height="15" rx="1" fill="#a8a8a8" />
          <path d="M2 3.500h11M2 7.500h11M2 11.500h11M5.500 2v3M8.500 6v3M10.500 10v3" stroke="#333" strokeWidth="1.300" />
        </Icon>
      </div>
    </div>
  );
}

function Arranger() {
  const allLanes = tracks.flatMap((t) => [t, ...(t.children ?? [])]);
  return (
    <section className="flex min-h-0 flex-1 overflow-hidden rounded-[3px] border-2 border-[#4b4b4b] bg-[#1a1a1a]">
      <div className="relative flex min-w-0 flex-1 flex-col pt-px pl-px">
        <div className="flex shrink-0">
          <div className="mb-px flex w-[199px] shrink-0 bg-[#444]">
            <div className="w-4 border-r border-[#1a1a1a] bg-[#47adff]" />
            <div className="flex flex-1 items-center pl-1">
              <Icon w={14} h={17}>
                <path d="M0 0.500h8l6 6v10.500H0z" fill="#d2d2d2" />
                <path d="M8 0.500v6h6" fill="#9a9a9a" />
                <path d="M2 9h10M2 12h10M2 15h10" stroke="#555" strokeDasharray="2 1.500" strokeWidth="1.500" />
              </Icon>
              <button type="button" className="ml-[6px] flex items-center gap-4 text-[12px] text-[#c4c4c4]">
                Project
                <Caret className="fill-[#707070]" />
              </button>
              <div className="mr-[9px] ml-auto flex items-center gap-[6px]">
                <Icon w={15} h={9}>
                  <path d="M0 2h15M0 7h15" stroke="#c4c4c4" strokeWidth="4" strokeDasharray="4.300 1" />
                </Icon>
                <Icon w={15} h={9}>
                  <path d="M0 2h15M0 7h15" stroke="#ff8717" strokeWidth="4" />
                </Icon>
                <Icon w={15} h={15} className="ml-[3px]">
                  <rect x="0.500" y="0.500" width="14" height="14" stroke="#ff8717" strokeDasharray="2 1.500" />
                  <path d="M4 11l7-7" stroke="#ff8717" strokeWidth="1.500" />
                  <circle cx="4" cy="11" r="2.200" fill="#ff8717" />
                  <circle cx="11" cy="4" r="2.200" fill="#ff8717" />
                </Icon>
                <Icon w={15} h={15}>
                  <rect width="15" height="15" fill="#c4c4c4" />
                  <path d="M4 11l7-7M9 11.500h5M11.500 9v5M10 10l3 3M13 10l-3 3" stroke="#2a2a2a" />
                  <circle cx="4" cy="11" r="2.200" fill="#2a2a2a" />
                  <circle cx="10.500" cy="4" r="2.200" fill="#2a2a2a" />
                </Icon>
              </div>
            </div>
          </div>
          <div className="w-px shrink-0" />
          <Ruler />
        </div>
        <div className="flex min-h-0 flex-1 overflow-hidden">
          <div className="flex w-[199px] shrink-0 flex-col">
            <TrackHeaders items={tracks} />
            <button type="button" aria-label="Add track" className="flex h-[22px] shrink-0 items-center justify-center bg-[#1c1c1c] text-[#9a9a9a]">
              <Plus size={12} strokeWidth={3.5} />
            </button>
            <TrackHeaders items={returnTracks} />
          </div>
          <div className="w-px shrink-0" />
          <div className="min-w-0 flex-1">
            {allLanes.map((track) => <Lane key={track.name} track={track} />)}
            <div className="h-[22px] bg-[#1c1c1c]" />
            {returnTracks.map((track) => <Lane key={track.name} track={track} />)}
          </div>
        </div>
        <div className="flex h-[30px] shrink-0 border-t border-[#161616]">
          <div className="flex w-[199px] shrink-0 items-center gap-[10px] bg-[#383838] pl-[9px]">
            <Icon w={9} h={14} className="text-[#c9c9c9]">
              <path d="M0.500 0.500h8M0.500 13.500h8M4.500 2v10M2 4.500L4.500 2 7 4.500M2 9.500L4.500 12 7 9.500" stroke="currentColor" />
            </Icon>
            <Icon w={12} h={12} className="text-[#ff8717]">
              <path d="M0 2h4.500q2.500 0 2.500 2v6M4 7.500l3 3 3-3" stroke="currentColor" strokeWidth="1.500" />
            </Icon>
            <X size={13} strokeWidth={2} className="text-[#ff8717]" />
          </div>
          <div className="w-px shrink-0" />
          <OverviewStrip />
        </div>
        <div style={{ left: 200 + barX(7) + 1 }} className="absolute top-8 bottom-0 w-px bg-white" />
        <div className="absolute top-px right-0 bottom-[31px] w-1 bg-[#565656]" />
      </div>
      <div className="w-px shrink-0" />
      <ToolColumn />
    </section>
  );
}

/* ---------- device panel ---------- */

function VerticalLabel(props: { children: string }) {
  return (
    <div className="flex min-h-0 flex-1 items-center">
      <span className="rotate-180 text-[11px] font-bold whitespace-nowrap text-white [writing-mode:vertical-rl]">{props.children}</span>
    </div>
  );
}

function ChainTab(props: { label: string; bar: string; icon: ReactNode }) {
  return (
    <div className="mr-[2px] flex w-[27px] shrink-0 flex-col items-center bg-[#404040] pt-2 pb-[7px]">
      <span className={clsx("h-1 w-full", props.bar)} />
      <div className="mt-[9px] h-[13px]">{props.icon}</div>
      <VerticalLabel>{props.label}</VerticalLabel>
      <KnobIcon />
      <span className="mt-[11px]"><RoutingIcon /></span>
      <span className={clsx("mt-[9px] h-1 w-full", props.bar)} />
    </div>
  );
}

function ModulatorSlot() {
  return (
    <div className="flex flex-1 gap-[3px]">
      <div className="w-[68px] rounded-[3px] bg-[#262626]">
        <svg width="68" height="68" viewBox="0 0 68 68" aria-hidden="true">
          <defs>
            <linearGradient id="mod-line" x1="0" x2="1">
              <stop offset="0" stopColor="#8a52b8" stopOpacity="0.1" />
              <stop offset="1" stopColor="#9a5cc8" />
            </linearGradient>
          </defs>
          <path d="M0 18.500h68" stroke="#3f3f3f" />
          <path d="M0 26.500h68M0 34.500h68M0 42.500h68" stroke="#303030" />
          <rect y="49" width="68" height="2" fill="url(#mod-line)" />
          <path d="M42 18h19M51 5v8M48.500 10.500L51 13l2.500-2.500M58 15.500l3 2.500-3 2.500z" stroke="#9a5cc8" strokeWidth="1.500" fill="none" />
          <rect x="47" y="14.500" width="7" height="7" fill="#5a3a72" stroke="#9a5cc8" strokeWidth="1.500" />
          <circle cx="31" cy="60" r="3.700" fill="#35ccf5" />
          <path d="M34 60h8M39 57l3 3-3 3" stroke="#35ccf5" fill="none" />
        </svg>
      </div>
      <button type="button" aria-label="Add modulator" className="flex w-[29px] items-center justify-center rounded-[3px] bg-[#404040] text-[#8f8f8f]">
        <Plus size={12} strokeWidth={3.5} />
      </button>
    </div>
  );
}

function EqGraph() {
  const freqX = (hz: number) => Math.round(238 + 136 * Math.log10(hz / 1000));
  const freqs = [
    20, 30, 40, 50, 60, 70, 80, 90, 100, 200, 300, 400, 500, 600, 700, 800, 900, 1000,
    2000, 3000, 4000, 5000, 6000, 7000, 8000, 9000, 10000,
  ];
  const gains = [30, 20, 10, 0, -10, -20, -30];
  return (
    <svg width="421" height="165" viewBox="0 0 421 165" className="block text-[10px]" fill="#7d7d7d">
      <defs>
        <linearGradient id="eq-curve" gradientUnits="userSpaceOnUse" x1="0" x2="421" y1="0" y2="0">
          <stop offset="0" stopColor="#801414" />
          <stop offset="0.200" stopColor="#c81e1e" />
          <stop offset="0.260" stopColor="#e8502a" />
          <stop offset="0.340" stopColor="#ffa628" />
          <stop offset="0.400" stopColor="#f2ee28" />
          <stop offset="0.520" stopColor="#3ee024" />
          <stop offset="0.640" stopColor="#30e890" />
          <stop offset="0.700" stopColor="#45e0e8" />
          <stop offset="0.800" stopColor="#8ab8f5" />
          <stop offset="0.880" stopColor="#c0b4ee" />
          <stop offset="0.920" stopColor="#d4d4d4" />
          <stop offset="1" stopColor="#c4c4c4" />
        </linearGradient>
      </defs>
      {freqs.map((hz) => (
        <rect key={hz} x={freqX(hz)} width={hz === 1000 || hz === 10000 || hz === 100 ? 2 : 1} height="165" fill={hz === 1000 || hz === 10000 || hz === 100 ? "#353535" : "#272727"} />
      ))}
      {gains.map((g) => (
        <rect key={g} y={82 - Math.round(g * 2.55)} width="421" height="1" fill="#2a2a2a" />
      ))}
      <text x="10" y="15">20</text>
      <text x="105" y="15">100</text>
      <text x="241" y="15">1k</text>
      <text x="377" y="15">10k</text>
      {gains.filter((g) => g !== 0).map((g) => (
        <text key={g} x="415" y={86 - Math.round(g * 2.55)} textAnchor="end">
          {g > 0 ? `+${g}` : g}
        </text>
      ))}
      <path d="M0 82.500h119" stroke="#444" />
      <path d="M119 82.500h302" stroke="#e4e4e4" />
      <path d="M0 71H65C85 71 95 75 105 78Q120 82.500 150 82C190 80 230 76.500 277 76C310 76 335 78 355 76C375 72 390 70 421 70" stroke="url(#eq-curve)" strokeWidth="2.500" fill="none" />
      <rect x="99" width="2" height="165" fill="#b0b0b0" />
      {[["↔", 100, 56], ["1", 100, 71], ["2", 139, 81], ["3", 277, 75], ["4", 370, 70]].map(([label, x, y]) => (
        <g key={label}>
          <circle cx={x} cy={y} r="6" fill="#fff" />
          <text x={x} y={Number(y) + 4} textAnchor="middle" fill="#222">{label}</text>
        </g>
      ))}
    </svg>
  );
}

function DynamicEq() {
  return (
    <div className="my-[12px] flex shrink-0 gap-[3px] rounded-[8px] border-[3px] border-l-0 border-[#4b4b4b] bg-[#4b4b4b]">
      <div className="-my-[3px] flex w-[27px] flex-col items-center rounded-l-[8px] bg-[#404040] pt-2 pb-[9px]">
        <PowerIcon className="text-[#ff8717]" />
        <FolderOpenIcon className="mt-[9px] h-[10px] w-[13px] fill-[#9a9a9a]" />
        <VerticalLabel>Dynamic EQ</VerticalLabel>
        <Icon w={11} h={11}>
          <rect x="0.500" y="0.500" width="10" height="9" rx="1" fill="#6a6a6a" stroke="#d0d0d0" />
          <path d="M1 2h9" stroke="#d0d0d0" strokeWidth="2" />
        </Icon>
        <span className="mt-2 mb-[11px]"><KnobIcon /></span>
        <RoutingIcon className="fill-[#ff8717] text-[#ff8717]" />
      </div>
      <div className="flex flex-col gap-1">
        <ModulatorSlot />
        <ModulatorSlot />
        <ModulatorSlot />
      </div>
      <div className="flex w-[421px] flex-col rounded-[3px] bg-[#1d1d1d] text-[11px]">
        <div className="flex h-6 items-center pt-px pr-[7px] pl-2 text-[#c4c4c4]">
          <span className="w-[39px]">Shift</span>
          <span className="w-[77px] text-[#ff8717]">0.00 st</span>
          <span className="w-[41px]">Gain</span>
          <span className="w-[70px] text-[#ff8717]">0.0 dB</span>
          <span className="w-[37px]">Range</span>
          <button type="button" className="w-7">±10</button>
          <button type="button" className="w-7">±20</button>
          <button type="button" className="h-full w-7 border-b-2 border-[#ff8717] text-[#ff8717]">±30</button>
          <Icon w={12} h={10} className="ml-auto fill-[#ff8717]">
            <path d="M0 10Q4 8 6 0q2 8 6 10L6 8z" />
            <path d="M3 9Q5 6 6 0q1 6 3 9z" />
          </Icon>
          <Icon w={7} h={12} className="ml-2 text-[#ff6a1a]">
            <path d="M3.500 1v10M1 3.500L3.500 1 6 3.500M1 8.500L3.500 11 6 8.500" stroke="currentColor" strokeWidth="1.300" />
          </Icon>
        </div>
        <EqGraph />
        <div className="flex flex-1 items-center pr-[21px] pl-2 text-[#f02828]">
          <span className="text-[#d4d4d4]">1</span>
          <Caret className="ml-1 fill-[#777]" />
          <SpeakerIcon className="ml-2 fill-[#d4d4d4]" />
          <PowerIcon className="ml-[14px]" />
          <Icon w={13} h={6} className="ml-[5px]">
            <path d="M0 0.500q5 2.500 7 2.500h6M0 5.500Q5 3 7 3" stroke="currentColor" />
          </Icon>
          <span className="ml-[5px]">Low-shelf</span>
          <Caret className="ml-[22px] fill-[#9a2020]" />
          <span className="ml-auto">96.4 Hz</span>
          <span className="ml-7">+4.4 dB</span>
          <span className="ml-[30px]">1.26</span>
        </div>
      </div>
    </div>
  );
}

function DevicePanel() {
  return (
    <section className="flex h-[246px] shrink-0 overflow-hidden rounded-[3px] border-2 border-[#4b4b4b] bg-[#0f0f0f]">
      <ChainTab
        label="PROJECT"
        bar="bg-[#8a8a8a]"
        icon={<Icon w={12} h={12}><path d="M0 3l3 3 3-5 3 5 3-3-1 6H1zM1 10h10v1.500H1z" fill="#c9c9c9" /></Icon>}
      />
      <ChainTab label="DRUM BUS" bar="bg-[#dc3400]" icon={<FolderOpenIcon className="fill-[#b5b5b5]" />} />
      <button type="button" aria-label="Add device before" className="w-[22px] shrink-0 pl-[5px] text-[#8a8a8a]">
        <Plus size={12} strokeWidth={3.5} />
      </button>
      <DynamicEq />
      <button type="button" aria-label="Add device after" className="ml-[5px] text-[#8a8a8a]">
        <Plus size={12} strokeWidth={3.5} />
      </button>
    </section>
  );
}

/* ---------- browser ---------- */

function BrowserTabs() {
  return (
    <div className="flex h-[41px] shrink-0 items-center border-b border-[#6c6c6c] bg-[#333] pl-[9px]">
      <button type="button" aria-label="All sources" className="mr-3">
        <Icon w={19} h={19}>
          <path d="M1 1h6v6H1zM12 1h6v6h-6zM1 12h6v6H1zM12 12h6v6h-6z" stroke="#b5b5b5" />
        </Icon>
      </button>
      <div className="flex items-center gap-[6px]">
        <button type="button" aria-label="Everything">
          <Icon w={18} h={18}>
            <rect x="0.500" y="0.500" width="17" height="17" fill="#1c1c1c" stroke="#777" />
            <path d="M9 3v12M3.500 6l11 6M14.500 6l-11 6" stroke="#9a9a9a" />
          </Icon>
        </button>
        <button type="button" aria-label="Devices">
          <Icon w={18} h={18}>
            <rect x="0.500" y="0.500" width="17" height="17" fill="#1c1c1c" stroke="#777" />
            <path d="M0.500 0.500h4v17h-4z" fill="#666" />
          </Icon>
        </button>
        <button type="button" aria-label="Presets">
          <Icon w={18} h={18}>
            <rect x="0.500" y="0.500" width="17" height="17" fill="#1c1c1c" stroke="#555" />
            <path d="M0.500 0.500h17v4H0.500z" fill="#555" />
            <path d="M3 9h5M6 7h7" stroke="#666" strokeWidth="2" />
            <circle cx="13.500" cy="13" r="4.500" fill="#9a9a9a" />
            <path d="M12.500 15.500v-5h2q1 0 1 1.300t-1 1.200h-2" stroke="#333" />
          </Icon>
        </button>
        <button type="button" aria-label="Samples">
          <Icon w={18} h={18}>
            <rect x="0.500" y="0.500" width="17" height="17" fill="#241c28" stroke="#6b4a78" />
            <path d="M0.500 0.500h17v4H0.500z" fill="#84588f" />
            <path d="M3.500 7v7M5.500 9v4M7.500 7.500v6M9.500 10v2M11.500 9v3M13 11h3" stroke="#84588f" />
          </Icon>
        </button>
        <button type="button" aria-label="My library">
          <Icon w={18} h={18}>
            <rect width="18" height="18" rx="1" fill="#96701c" />
            <circle cx="9" cy="6.500" r="3.200" fill="#3d3524" />
            <path d="M3 15q0-5 6-5t6 5z" fill="#3d3524" />
          </Icon>
        </button>
      </div>
      <button type="button" aria-label="Files" className="ml-1">
        <Icon w={22} h={22}>
          <rect x="0.800" y="0.800" width="20.400" height="20.400" rx="3" stroke="#ececec" strokeWidth="1.500" />
          <rect x="3.500" y="3.500" width="15" height="13" rx="1" fill="#55c4ee" stroke="#c4e8f5" />
          <path d="M8 18.500h6" stroke="#ececec" strokeWidth="2" />
        </Icon>
      </button>
    </div>
  );
}

const previewNotes = [
  [0, 10], [0, 15], [0, 18], [0, 21], [16, 10], [16, 18], [16, 21], [16, 26], [32, 4], [32, 9], [32, 15], [32, 20], [32, 25],
  [48, 0], [48, 9], [50, 15], [48, 19], [48, 21], [64, 7], [64, 12], [64, 18], [64, 26], [80, 26], [84, 7], [96, 0], [96, 9],
  [96, 15], [96, 21], [112, 10], [114, 12], [112, 18], [113, 21],
];

function Browser() {
  return (
    <aside className="flex w-[222px] shrink-0 flex-col overflow-hidden rounded-[3px] border-2 border-[#4b4b4b] bg-[#0f0f0f] text-[11px] font-medium text-[#ececec]">
      <BrowserTabs />
      <div className="relative flex h-[31px] shrink-0 items-center justify-center bg-[#333] text-[12px] font-normal text-[#c9c9c9]">
        File Browser
        <button type="button" aria-label="Favorite" className="absolute right-3">
          <Star size={15} strokeWidth={1.5} className="text-[#a8912f]" />
        </button>
      </div>
      <div className="relative h-[340px] shrink-0 overflow-hidden border-b-[3px] border-[#4b4b4b]">
        <ul className="-mt-[11px] pr-[9px] pl-[2px]">
          {tree.map((item, i) => (
            <li
              key={i}
              className={clsx(
                "flex h-[23px] items-center",
                item.level === 1 ? "pl-[66px]" : "pl-[81px]",
                item.selected && "bg-linear-to-b from-[#2f3e4a] to-[#1a232a] text-[#c4c4c4]",
                i === 0 && "opacity-50",
              )}
            >
              {item.open ? <ChevronDown size={12} /> : <ChevronRight size={12} className="text-[#8a8a8a]" />}
              <span className="mr-[7px] ml-[7px]"><FolderIcon /></span>
              {item.name}
            </li>
          ))}
        </ul>
        <div className="absolute top-[245px] right-0 h-[33px] w-1 bg-[#4b4b4b]" />
      </div>
      <div className="relative min-h-0 flex-1 overflow-hidden pt-1">
        <ul className="pr-[9px] pl-[2px]">
          {Array.from({ length: 16 }, (_, i) => (
            <li key={i} className={clsx("flex h-[23px] items-center gap-[9px] pl-[9px] whitespace-nowrap", i === 0 && "bg-[#2c3944]")}>
              <FileIcon />
              {i < 15 && "Morfeeus_MPE_Pads_PureSmoo..."}
            </li>
          ))}
        </ul>
        <div className="absolute top-0 right-0 h-[335px] w-1 bg-[#4b4b4b]" />
      </div>
      <div className="h-[148px] shrink-0 bg-[#333] px-[7px] pt-2 text-[#c4c4c4]">
        <div className="flex items-center pl-[3px]">
          <FileIcon />
          <span className="ml-[11px] flex-1 whitespace-nowrap">Morfeeus_MPE_Pads_PureS...</span>
          <ChevronDown size={13} className="mr-[3px] text-white" />
        </div>
        <dl className="grid grid-cols-2 text-center leading-[17px]">
          <div>
            <dt className="pt-1 text-[#9a9a9a]">DURATION</dt>
            <dd>14.77 s</dd>
          </div>
          <div>
            <dt className="pt-1 text-[#9a9a9a]">SIZE</dt>
            <dd>505 bytes</dd>
          </div>
          <div className="col-span-2 leading-4">
            <dt className="pt-1 text-[#9a9a9a]">Last Modified</dt>
            <dd>2026-09-24 12:45</dd>
          </div>
        </dl>
        <div className="mt-[2px] flex h-10 items-center rounded-[3px] bg-[#111] px-1">
          <div className="mt-1 h-[27px] w-[13px] border-t-2 border-[#ff8717] bg-[#5c3512]" />
          <svg width="160" height="32" className="ml-[5px]" aria-hidden="true">
            {previewNotes.map(([x, y], i) => (
              <rect key={i} x={Math.round(x * 1.25)} y={y + 1} width={i % 5 === 4 ? 10 : 17} height="2" fill="#1f6a94" />
            ))}
          </svg>
          <div className="ml-auto flex flex-col gap-2 pr-[2px]">
            <button type="button" aria-label="Preview"><Icon w={10} h={12} className="fill-[#c4c4c4]"><path d="M0 0l10 6L0 12z" /></Icon></button>
            <button type="button" aria-label="Preview volume"><Icon w={10} h={12} className="fill-[#c4c4c4]"><path d="M0 3.500h3L9 0v12L3 8.500H0z" /></Icon></button>
          </div>
        </div>
      </div>
    </aside>
  );
}

/* ---------- status bar ---------- */

function StatusBar() {
  return (
    <footer className="flex h-[34px] shrink-0 items-center bg-[#333] pr-[14px] pl-[18px] text-[11px]">
      <Icon w={5} h={12} className="text-[#ff8717]">
        <path d="M1 1.500h2.500M0 5h3v6M0 11h5" stroke="currentColor" strokeWidth="1.800" />
      </Icon>
      <span className="ml-[15px] h-4 w-px bg-[#666]" />
      <nav className="ml-[14px] flex gap-[11px] font-bold text-[#c4c4c4]">
        <a href="#arrange" className="text-[#ff8717]">ARRANGE</a>
        <a href="#mix">MIX</a>
        <a href="#edit">EDIT</a>
      </nav>
      <span className="ml-[13px] h-4 w-px bg-[#666]" />
      <div className="ml-[13px] flex items-center gap-[15px]">
        <Icon w={10} h={10}>
          <path d="M0 1.500h3M7 1.500h3M3 5h4M0 8.500h3M7 8.500h3" stroke="#d0d0d0" strokeWidth="2" />
        </Icon>
        <Icon w={13} h={11}>
          <rect x="0.500" y="0.500" width="12" height="10" rx="1" fill="#7a4410" stroke="#ff8717" />
          <path d="M1 1h3.500v9H1z" fill="#ff8717" />
        </Icon>
        <Icon w={14} h={14}>
          <path d="M2.500 0v14M7 0v14M11.500 0v14M0 9.500h5M4.500 5.500h5M9 8.500h5" stroke="#d0d0d0" strokeWidth="1.500" />
        </Icon>
      </div>
      <ul className="ml-[25px] flex flex-1 gap-[18px] whitespace-nowrap">
        {hints.map(([key, action]) => (
          <li key={key} className="flex gap-[6px]">
            <kbd className="font-[Lato,sans-serif] font-bold text-[#c4c4c4]">{key}</kbd>
            <span className="text-[#8f8f8f]">{action}</span>
          </li>
        ))}
      </ul>
      <div className="flex items-center gap-[14px]">
        <Icon w={13} h={13}>
          <circle cx="5.500" cy="5.500" r="4.500" stroke="#ff8717" strokeWidth="1.300" />
          <path d="M8.500 8.500L12.500 12.500" stroke="#ff8717" strokeWidth="2" />
        </Icon>
        <Icon w={12} h={13}>
          <path d="M0 0h6v6h6v7H0z" fill="#d0d0d0" />
          <path d="M7.500 0L12 4.500H7.500z" fill="#d0d0d0" />
        </Icon>
        <Icon w={13} h={15}>
          <rect width="13" height="15" rx="3.500" fill="#d0d0d0" />
          <circle cx="6.500" cy="9" r="3.200" stroke="#333" strokeWidth="1.500" />
          <circle cx="6.500" cy="3" r="1.200" fill="#333" />
        </Icon>
        <Icon w={13} h={13}>
          <path d="M3 0h2.500v5H13v4q0 4-4 4H6Q3 11 0 7l1.500-1L3 7.500z" fill="#d0d0d0" />
        </Icon>
        <span className="h-4 w-px bg-[#666]" />
        <Icon w={13} h={13}>
          <path d="M0 0h2.500v8H4v5H0zM5.500 0h2v8H9v5H4.800V8h.7zM10.500 0H13v13H9.500V8h1z" fill="#d0d0d0" />
        </Icon>
      </div>
    </footer>
  );
}

export default function App() {
  return (
    <div className="flex h-screen min-w-[1400px] flex-col overflow-hidden bg-[#272727] font-[Lato,sans-serif] [&_.font-mono-lcd]:font-['Liberation_Mono',monospace]">
      <TopBar />
      <main className="mb-[2px] flex min-h-0 flex-1 gap-[2px]">
        <Inspector />
        <div className="flex min-w-0 flex-1 flex-col gap-[2px]">
          <Arranger />
          <DevicePanel />
        </div>
        <Browser />
      </main>
      <StatusBar />
    </div>
  );
}
